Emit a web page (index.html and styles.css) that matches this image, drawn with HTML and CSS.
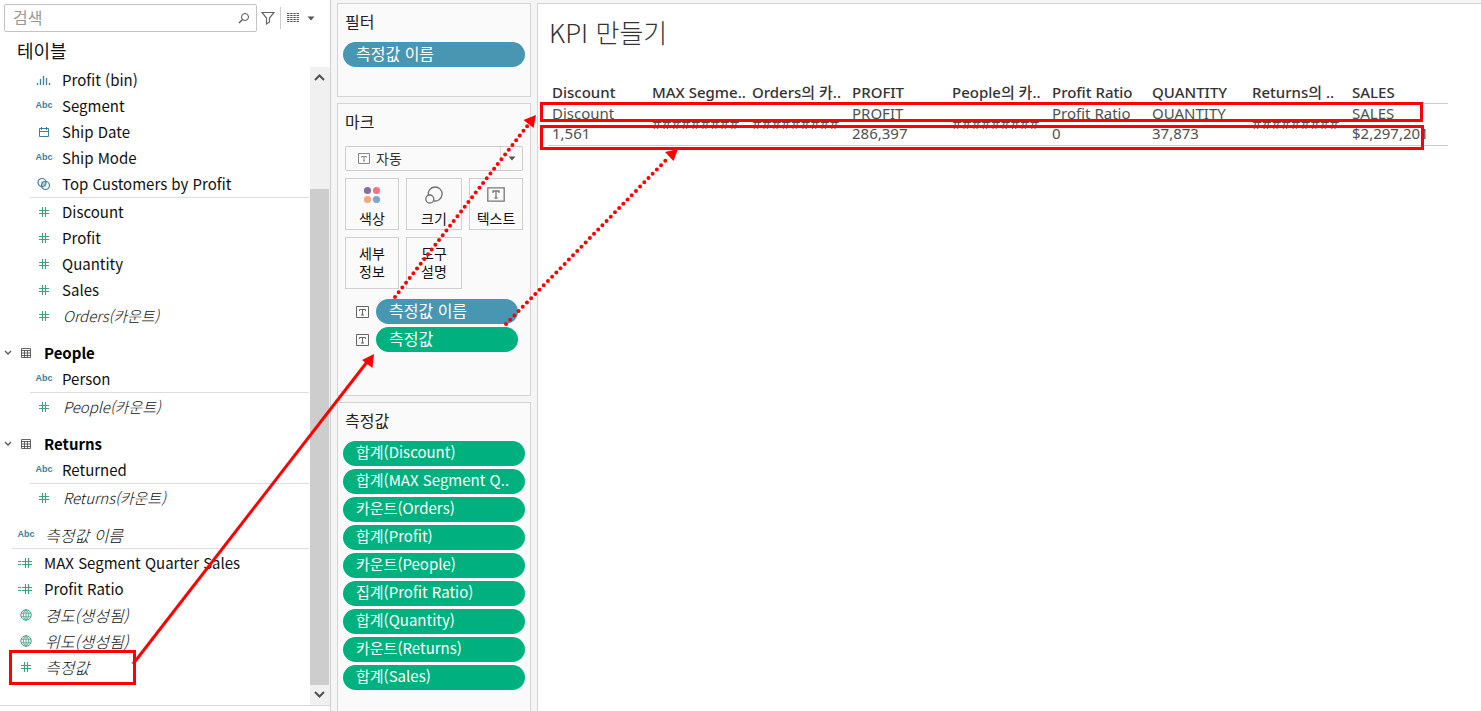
FILE: index.html
```html
<!DOCTYPE html>
<html lang="ko">
<head>
<meta charset="utf-8">
<title>KPI 만들기</title>
<link rel="stylesheet" href="styles.css">
</head>
<body>
<svg class="defs" width="0" height="0" aria-hidden="true">
  <symbol id="hash" viewBox="0 0 12 12"><path d="M4.500 1v10M7.500 1v10M1 4.500h10M1 7.500h10" fill="none" stroke="currentColor" stroke-width="1.100"/></symbol>
  <symbol id="calc" viewBox="0 0 16 12"><path d="M7.500 1v10M10.500 1v10M4 4.500h10M4 7.500h10M0 4.500h3M0 7.500h3" fill="none" stroke="currentColor" stroke-width="1.100"/></symbol>
  <symbol id="bin" viewBox="0 0 16 12"><path d="M1.500 9v2M4.500 5v6M7.500 2v9M10.500 4v7M13.500 9v2" fill="none" stroke="currentColor" stroke-width="1.300"/></symbol>
  <symbol id="date" viewBox="0 0 12 12"><path d="M1.500 2.500h9v8h-9zM1.500 5.500h9M3.500 1v3M8.500 1v3" fill="none" stroke="currentColor"/></symbol>
  <symbol id="set" viewBox="0 0 16 14"><path d="M5 4.200A4 4 0 0 1 10 9.400A4 4 0 0 1 5 4.200z" fill="currentColor" opacity=".35"/><circle cx="6" cy="5.500" r="4" fill="none" stroke="currentColor" stroke-width="1.200"/><circle cx="9.500" cy="8.500" r="4" fill="none" stroke="currentColor" stroke-width="1.200"/></symbol>
  <symbol id="globe" viewBox="0 0 12 12"><path d="M6 .7v10.600M1 4.200h10M1 7.800h10M6 .7C2.500 3 2.500 9 6 11.300M6 .7C9.500 3 9.500 9 6 11.300" fill="none" stroke="currentColor" stroke-width=".8"/><circle cx="6" cy="6" r="5.200" fill="none" stroke="currentColor"/></symbol>
  <symbol id="grid" viewBox="0 0 12 12"><path d="M1.500 1.500h9v9h-9zM1 3.500h10M1 6h10M1 8.500h10M4.500 3v8M7.500 3v8" fill="none" stroke="currentColor" stroke-width=".9"/></symbol>
  <symbol id="down" viewBox="0 0 8 6"><path d="M1 1l3 3 3-3" fill="none" stroke="currentColor" stroke-width="1.300"/></symbol>
  <symbol id="caret" viewBox="0 0 8 5"><path d="M.5.500h7L4 4.500z" fill="currentColor"/></symbol>
  <symbol id="tbox" viewBox="0 0 14 12"><path d="M.5.500h12v11H.500zM3.500 5V3.500h6V5M6.500 3.500v5.500M5 9h3" fill="none" stroke="currentColor"/></symbol>
</svg>

<div class="app">
  <aside class="data-pane">
    <div class="toolbar">
      <div class="search">
        <input type="text" placeholder="검색" aria-label="검색">
        <svg width="12" height="12" viewBox="0 0 12 12"><circle cx="7" cy="5" r="3.500" fill="none" stroke="#555"/><path d="M4.500 7.500L1 11" stroke="#555" stroke-width="1.300"/></svg>
      </div>
      <button class="icon-btn" aria-label="필터"><svg width="14" height="14" viewBox="0 0 14 14"><path d="M1 1.500h12L8.500 7v4L5.500 13V7z" fill="none" stroke="#666" stroke-width="1.200"/></svg></button>
      <button class="view-btn" aria-label="보기"><svg width="12" height="10" viewBox="0 0 12 10"><path d="M0 .5h12M0 2.500h12M0 4.500h12M0 6.500h12M0 8.500h12" stroke="#555" stroke-dasharray="2.400 .8"/></svg><svg width="8" height="5"><use href="#caret"/></svg></button>
    </div>
    <h2 class="pane-title">테이블</h2>
    <div class="fields">
      <div class="list">
        <div class="group nested">
          <div class="row dim"><span class="ico"><svg width="16" height="12"><use href="#bin"/></svg></span>Profit (bin)</div>
          <div class="row dim"><span class="ico abc">Abc</span>Segment</div>
          <div class="row dim"><span class="ico"><svg width="12" height="12"><use href="#date"/></svg></span>Ship Date</div>
          <div class="row dim"><span class="ico abc">Abc</span>Ship Mode</div>
          <div class="row dim"><span class="ico"><svg width="16" height="14"><use href="#set"/></svg></span>Top Customers by Profit</div>
          <div class="rule"></div>
          <div class="row mea"><span class="ico"><svg width="12" height="12"><use href="#hash"/></svg></span>Discount</div>
          <div class="row mea"><span class="ico"><svg width="12" height="12"><use href="#hash"/></svg></span>Profit</div>
          <div class="row mea"><span class="ico"><svg width="12" height="12"><use href="#hash"/></svg></span>Quantity</div>
          <div class="row mea"><span class="ico"><svg width="12" height="12"><use href="#hash"/></svg></span>Sales</div>
          <div class="row mea"><span class="ico"><svg width="12" height="12"><use href="#hash"/></svg></span><em>Orders(카운트)</em></div>
        </div>
        <div class="table-name"><svg width="8" height="6"><use href="#down"/></svg><svg width="12" height="12"><use href="#grid"/></svg><b>People</b></div>
        <div class="group nested">
          <div class="row dim"><span class="ico abc">Abc</span>Person</div>
          <div class="rule"></div>
          <div class="row mea"><span class="ico"><svg width="12" height="12"><use href="#hash"/></svg></span><em>People(카운트)</em></div>
        </div>
        <div class="table-name"><svg width="8" height="6"><use href="#down"/></svg><svg width="12" height="12"><use href="#grid"/></svg><b>Returns</b></div>
        <div class="group nested">
          <div class="row dim"><span class="ico abc">Abc</span>Returned</div>
          <div class="rule"></div>
          <div class="row mea"><span class="ico"><svg width="12" height="12"><use href="#hash"/></svg></span><em>Returns(카운트)</em></div>
        </div>
        <div class="group loose">
          <div class="row dim"><span class="ico abc">Abc</span><em class="ko">측정값 이름</em></div>
          <div class="rule"></div>
          <div class="row mea"><span class="ico"><svg width="16" height="12"><use href="#calc"/></svg></span>MAX Segment Quarter Sales</div>
          <div class="row mea"><span class="ico"><svg width="16" height="12"><use href="#calc"/></svg></span>Profit Ratio</div>
          <div class="row mea"><span class="ico"><svg width="12" height="12"><use href="#globe"/></svg></span><em class="ko">경도(생성됨)</em></div>
          <div class="row mea"><span class="ico"><svg width="12" height="12"><use href="#globe"/></svg></span><em class="ko">위도(생성됨)</em></div>
          <div class="row mea"><span class="ico"><svg width="12" height="12"><use href="#hash"/></svg></span><em class="ko">측정값</em></div>
        </div>
      </div>
      <div class="scrollbar">
        <svg width="20" height="20" viewBox="0 0 20 20"><path d="M5 13l4.500-4.500L14 13" fill="none" stroke="#505050" stroke-width="2"/></svg>
        <div class="track"><div class="thumb"></div></div>
        <svg width="20" height="20" viewBox="0 0 20 20"><path d="M5 7l4.500 4.500L14 7" fill="none" stroke="#505050" stroke-width="2"/></svg>
      </div>
    </div>
  </aside>

  <section class="shelves">
    <div class="card filters">
      <h3>필터</h3>
      <button class="pill blue ko">측정값 이름</button>
    </div>
    <div class="card marks">
      <h3>마크</h3>
      <div class="mark-type">
        <svg width="12" height="11" viewBox="0 0 12 11"><path d="M.500.500h11v10H.500zM3.500 4.500v-1h5v1M6 3.500v4.500M5 8h2" fill="none" stroke="currentColor"/></svg>
        <select aria-label="마크 유형"><option>자동</option></select>
        <span class="arrow"><svg width="8" height="5"><use href="#caret"/></svg></span>
      </div>
      <div class="tiles">
        <button class="tile pic"><svg width="18" height="18" viewBox="0 0 18 18"><circle cx="4.500" cy="4.500" r="3.600" fill="#866f9c"/><circle cx="13.500" cy="4.500" r="3.600" fill="#fa7186"/><circle cx="4.500" cy="13.500" r="3.600" fill="#f5a77b"/><circle cx="13.500" cy="13.500" r="3.600" fill="#7ea5cd"/></svg>색상</button>
        <button class="tile pic"><svg width="20" height="18" viewBox="0 0 20 18"><path d="M4.200 9.200A7 7 0 1 1 9.500 14.800" fill="none" stroke="#707070" stroke-width="1.300"/><circle cx="5.800" cy="13" r="4" fill="none" stroke="#707070" stroke-width="1.300"/></svg>크기</button>
        <button class="tile pic"><svg width="18" height="18" viewBox="0 0 18 18"><path d="M.800 1.800h16.400v13.400H.800z" fill="none" stroke="#777" stroke-width="1.300"/><path d="M6 7V5h6v2M9 5v7M7.500 12h3" fill="none" stroke="#777" stroke-width="1.300"/></svg>텍스트</button>
        <button class="tile">세부<br>정보</button>
        <button class="tile">도구<br>설명</button>
      </div>
      <div class="encodings">
        <svg width="14" height="12"><use href="#tbox"/></svg><button class="pill blue ko">측정값 이름</button>
        <svg width="14" height="12"><use href="#tbox"/></svg><button class="pill ko">측정값</button>
      </div>
    </div>
    <div class="card measures">
      <h3>측정값</h3>
      <button class="pill">합계(Discount)</button>
      <button class="pill">합계(MAX Segment Q..</button>
      <button class="pill">카운트(Orders)</button>
      <button class="pill">합계(Profit)</button>
      <button class="pill">카운트(People)</button>
      <button class="pill">집계(Profit Ratio)</button>
      <button class="pill">합계(Quantity)</button>
      <button class="pill">카운트(Returns)</button>
      <button class="pill">합계(Sales)</button>
    </div>
  </section>

  <main class="sheet">
    <h1>KPI 만들기</h1>
    <table class="crosstab">
      <thead>
        <tr><th>Discount</th><th>MAX Segme..</th><th>Orders의 카..</th><th>PROFIT</th><th>People의 카..</th><th>Profit Ratio</th><th>QUANTITY</th><th>Returns의 ..</th><th>SALES</th></tr>
      </thead>
      <tbody>
        <tr><td>Discount</td><td rowspan="2">#########</td><td rowspan="2">#########</td><td>PROFIT</td><td rowspan="2">#########</td><td>Profit Ratio</td><td>QUANTITY</td><td rowspan="2">#########</td><td>SALES</td></tr>
        <tr><td>1,561</td><td>286,397</td><td>0</td><td>37,873</td><td>$2,297,201</td></tr>
      </tbody>
    </table>
  </main>

  <svg class="annotations" width="1481" height="711" viewBox="0 0 1481 711" aria-hidden="true">
    <g fill="none" stroke="#f00" stroke-width="3">
      <path d="M10.500 651.500h124v32h-124zM541.500 103.500h880v17h-880zM541.500 126.500h881v22h-881z"/>
      <path d="M133 664L367 362"/>
      <path d="M395 297L528 125M506 324L669 157" stroke-width="4" stroke-linecap="round" stroke-dasharray="0 6"/>
    </g>
    <path d="M374 354L372.500 368L362 360zM536 115L533.500 128L523.500 120zM678 149L673.500 161L665 152z" fill="#f00"/>
  </svg>
</div>
</body>
</html>
```
FILE: styles.css
```css
* { box-sizing: border-box; }
body {
  margin: 0;
  background: #f5f5f5;
  color: #111;
  font-family: "Noto Sans CJK KR", sans-serif;
  font-size: 16px;
}
button, input, select { font: inherit; color: inherit; margin: 0; }
button { border: 0; background: none; padding: 0; }
h1, h2, h3 { margin: 0; font-weight: 400; }
svg { display: block; flex: none; }
.defs { position: absolute; }
.app { position: relative; display: flex; min-height: 100vh; overflow: hidden; }

.data-pane {
  display: flex;
  flex-direction: column;
  flex: none;
  width: 331px;
  padding-bottom: 5px;
  background: #fff;
  border-right: 1px solid #d0d0d0;
}
.toolbar { display: flex; align-items: center; gap: 4px; padding: 4px 0 0 4px; }
.search {
  display: flex;
  align-items: center;
  width: 253px;
  height: 28px;
  padding: 0 6px 0 8px;
  border: 1px solid #c4c4c4;
  border-radius: 2px;
}
.search input { flex: 1; min-width: 0; border: 0; padding: 0 0 2px; outline: 0; background: none; height: 24px; }
.search input::placeholder { color: #999; opacity: 1; }
.view-btn {
  display: flex;
  align-items: center;
  gap: 8px;
  height: 22px;
  margin-left: 1px;
  padding-left: 6px;
  border-left: 1px solid #ccc;
  color: #555;
}
.pane-title { padding: 2px 0 0 17px; height: 35px; font-size: 18px; line-height: 32px; }
.fields { display: flex; flex: 1; border-bottom: 1px solid #d8d8d8; }
.list { flex: 1; min-width: 0; }
.row { display: flex; align-items: center; height: 26px; font-size: 15px; line-height: 24px; padding-bottom: 1px; white-space: nowrap; }
.row em { font-weight: 300; padding-left: 1px; }
.row .ko, .pill.ko { font-size: 16px; }
.ico { display: flex; justify-content: center; width: 28px; margin-right: 4px; }
.abc { font: 700 9px/13px "Liberation Sans", sans-serif; }
.dim .ico { color: #3b7f9f; }
.mea .ico { color: #3fa07c; }
.nested { margin-bottom: 11px; }
.nested .row { padding-left: 30px; }
.nested .rule { margin-left: 30px; }
.loose .row { padding-left: 12px; }
.loose .rule { margin-left: 12px; }
.rule { height: 1px; margin: 0 1px 1px 0; background: #ddd; }
.table-name { display: flex; align-items: center; height: 26px; padding: 0 0 1px 4px; color: #555; font-size: 15px; line-height: 24px; }
.table-name b { margin-left: 12px; color: #000; }
.table-name svg + svg { margin-left: 8px; }
.scrollbar { display: flex; flex-direction: column; width: 20px; background: #f0f0f0; }
.track { display: flex; flex-direction: column; justify-content: flex-end; flex: 1; }
.thumb { height: 83%; width: 19px; background: #cdcdcd; }

.shelves { display: flex; flex-direction: column; gap: 6px; flex: none; width: 206px; padding: 3px 6px 0; }
.card { background: #fafafa; border: 1px solid #d4d4d4; padding: 5px; }
.card h3 { height: 33px; padding-left: 2px; font-size: 16px; line-height: 24px; color: #222; }
.filters { height: 94px; }
.marks { height: 293px; }
.measures { flex: 1; display: flex; flex-direction: column; gap: 3px; border-bottom: 0; }
.measures h3 { height: 30px; }
.pill {
  display: block;
  width: 182px;
  height: 25px;
  padding: 0 0 3px 13px;
  border-radius: 13px;
  background: #00b180;
  color: #fff;
  font-size: 15px;
  line-height: 22px;
  text-align: left;
  white-space: nowrap;
}
.blue { background: #4996b2; }
.mark-type {
  display: flex;
  align-items: center;
  height: 25px;
  margin: 4px 2px 7px;
  padding-left: 12px;
  border: 1px solid #ccc;
  border-radius: 2px;
  color: #888;
}
.mark-type select { flex: 1; height: 23px; padding: 0 0 2px 6px; border: 0; background: none; appearance: none; color: #333; font-size: 14px; }
.arrow { display: flex; align-items: center; justify-content: center; width: 22px; height: 23px; border-left: 1px solid #ddd; color: #555; }
.tiles { display: grid; grid-template-columns: 54px 56px 54px; grid-auto-rows: 52px; gap: 7px; margin: 0 2px; }
.tile {
  display: flex;
  flex-direction: column;
  align-items: center;
  justify-content: center;
  gap: 5px;
  border: 1px solid #d0d0d0;
  font-size: 14px;
  line-height: 18px;
  color: #111;
  padding-bottom: 2px;
}
.tile.pic { padding: 4px 0 0; }
.encodings { display: grid; grid-template-columns: 14px 142px; column-gap: 6px; row-gap: 3px; align-items: center; margin: 10px 0 0 13px; color: #666; }
.encodings .pill { width: 142px; }

.sheet { flex: 1; min-width: 0; margin-top: 3px; padding: 0 0 0 10px; background: #fff; border: solid #d4d4d4; border-width: 1px 0 0 1px; }
.sheet h1 { padding-left: 1px; font-size: 26px; font-weight: 300; line-height: 56px; color: #333; }
.crosstab {
  width: 900px;
  margin-top: 22px;
  table-layout: fixed;
  border-collapse: collapse;
  font-family: "Noto Sans", "Noto Sans CJK KR", sans-serif;
  font-size: 15px;
  line-height: 18px;
  white-space: nowrap;
  color: #505050;
  border-bottom: 1px solid #ccc;
}
.crosstab thead { border-bottom: 1px solid #ccc; }
.crosstab th, .crosstab td { height: 21px; padding: 0 0 2px 4px; text-align: left; }
.crosstab th { font-weight: 500; color: #333; padding-bottom: 1px; }
.annotations { position: absolute; left: 0; top: 0; pointer-events: none; }
```
